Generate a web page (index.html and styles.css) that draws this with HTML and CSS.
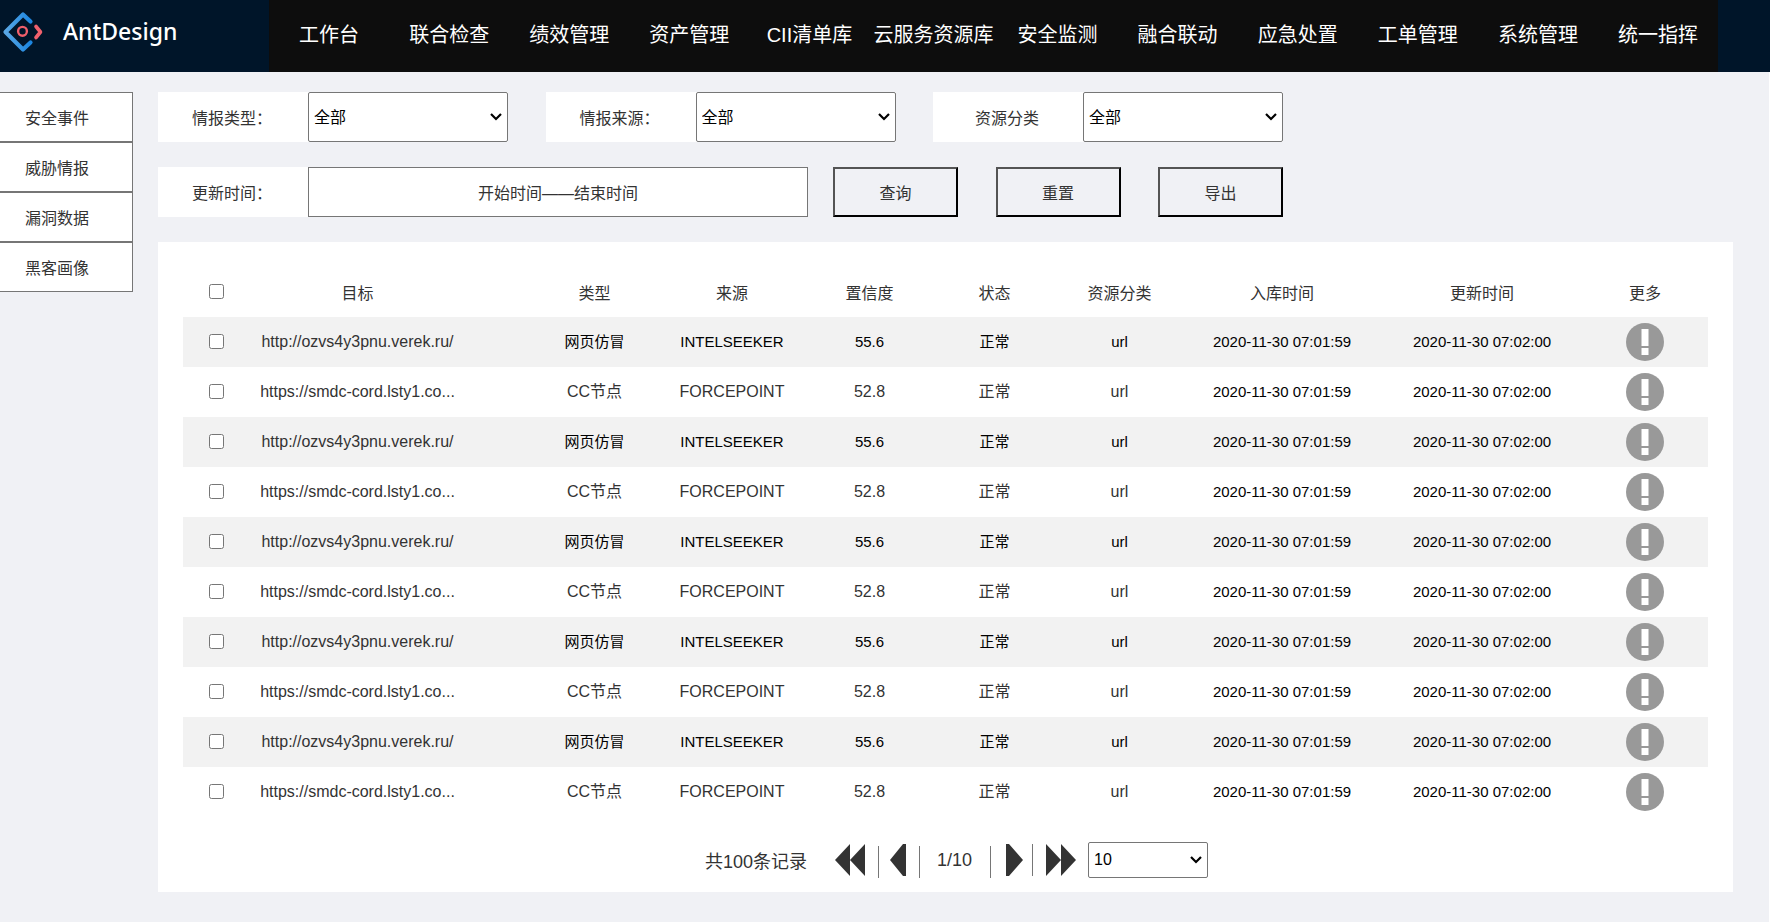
FILE: index.html
```html
<!DOCTYPE html>
<html lang="zh-CN">
<head>
<meta charset="utf-8">
<title>AntDesign</title>
<link rel="stylesheet" href="styles.css">
</head>
<body>
<div class="page">
  <header class="header">
    <div class="brand">
      <svg class="logo" viewBox="0 0 42 44" fill="none" aria-hidden="true">
        <defs><linearGradient id="blue" x1="0" y1="0" x2="1" y2="0"><stop offset="0" stop-color="#5aa7e4"/><stop offset="1" stop-color="#1c86e0"/></linearGradient></defs>
        <path d="M29.500 11.500 22 4.500 4.500 22 22 39.500 29.500 32.500" stroke="url(#blue)" stroke-width="4.200" stroke-linejoin="round" stroke-linecap="round"/>
        <circle cx="21.500" cy="21.300" r="4.400" stroke="#ef5f6b" stroke-width="2.400"/>
        <path d="M35 16.500 39.500 22 35 27.500" stroke="#f0616d" stroke-width="3.600" stroke-linejoin="round" stroke-linecap="round"/>
      </svg>
      <span class="brand-name">AntDesign</span>
    </div>
    <nav class="nav">
      <a href="#">工作台</a><a href="#">联合检查</a><a href="#">绩效管理</a><a href="#">资产管理</a><a href="#">CII清单库</a><a href="#">云服务资源库</a><a href="#">安全监测</a><a href="#">融合联动</a><a href="#">应急处置</a><a href="#">工单管理</a><a href="#">系统管理</a><a href="#">统一指挥</a>
    </nav>
  </header>
  <div class="body">
    <aside class="side">
      <a href="#">安全事件</a><a href="#">威胁情报</a><a href="#">漏洞数据</a><a href="#">黑客画像</a>
    </aside>
    <main class="main">
      <form class="filters">
        <div class="filter-row">
          <div class="field"><label for="type">情报类型：</label><select id="type"><option>全部</option></select></div>
          <div class="field"><label for="source">情报来源：</label><select id="source"><option>全部</option></select></div>
          <div class="field"><label for="category">资源分类</label><select id="category"><option>全部</option></select></div>
        </div>
        <div class="filter-row">
          <div class="field"><label for="time">更新时间：</label><input id="time" type="text" value="开始时间——结束时间"></div>
          <div class="actions"><button type="button">查询</button><button type="button">重置</button><button type="button">导出</button></div>
        </div>
      </form>
      <section class="panel">
        <table class="table">
          <colgroup><col class="c-check"><col class="c-target"><col class="c-mid"><col class="c-source"><col class="c-mid"><col class="c-mid"><col class="c-mid"><col class="c-time"><col class="c-time"><col class="c-more"></colgroup>
          <thead>
            <tr><th><input type="checkbox" aria-label="全选"></th><th class="target">目标</th><th>类型</th><th>来源</th><th>置信度</th><th>状态</th><th>资源分类</th><th>入库时间</th><th>更新时间</th><th>更多</th></tr>
          </thead>
          <tbody id="rows"></tbody>
        </table>
        <div class="pager">
          <span class="total">共100条记录</span>
          <button type="button" aria-label="首页"><svg width="30" height="32" viewBox="0 0 30 32"><path d="M0 16 15 0v32zM15 16 30 0v32z"/></svg></button>
          <i class="bar"></i>
          <button type="button" aria-label="上一页"><svg width="16" height="32" viewBox="0 0 16 32"><path d="M0 16 13 0h3v32h-3z"/></svg></button>
          <i class="bar"></i>
          <span class="current">1/10</span>
          <i class="bar"></i>
          <button type="button" class="next" aria-label="下一页"><svg width="17" height="32" viewBox="0 0 17 32"><path d="M17 16 3 0H0v32h3z"/></svg></button>
          <i class="bar high"></i>
          <button type="button" aria-label="末页"><svg width="30" height="32" viewBox="0 0 30 32"><path d="M15 16 0 0v32zM30 16 15 0v32z"/></svg></button>
          <select aria-label="每页条数"><option>10</option></select>
        </div>
      </section>
    </main>
  </div>
</div>
<script src="rows.js"></script>
</body>
</html>
```
FILE: rows.js
```js
const kinds = [
  ['http://ozvs4y3pnu.verek.ru/', '网页仿冒', 'INTELSEEKER', '55.6', '正常', 'url'],
  ['https://smdc-cord.lsty1.co...', 'CC节点', 'FORCEPOINT', '52.8', '正常', 'url']
];
const icon = '<svg width="38" height="38" viewBox="0 0 38 38"><circle cx="19" cy="19" r="19" fill="#999"/><path d="M15.500 6h7v17h-7zM15.500 25h7v7h-7z" fill="#fff"/></svg>';
let html = '';
for (let i = 0; i < 10; i++) {
  const [target, ...rest] = kinds[i % 2];
  html += `<tr><td><input type="checkbox" aria-label="选择第${i + 1}行"></td><td class="target">${target}</td>`
    + rest.map(v => `<td>${v}</td>`).join('')
    + '<td class="time">2020-11-30 07:01:59</td><td class="time">2020-11-30 07:02:00</td>'
    + `<td><button type="button" class="more" aria-label="更多">${icon}</button></td></tr>`;
}
document.getElementById('rows').innerHTML = html;
```
FILE: styles.css
```css
* { box-sizing: border-box; }
body {
  margin: 0;
  background: #fff;
  color: #333;
  font: 16px/24px "Liberation Sans", "Noto Sans CJK SC", sans-serif;
}
button, input, select { font: inherit; color: inherit; margin: 0; }
a { color: inherit; text-decoration: none; }
select {
  appearance: none;
  padding: 0 24px 0 5px;
  border: 1px solid #767676;
  border-radius: 2px;
  background: #fff url("data:image/svg+xml,%3Csvg xmlns='http://www.w3.org/2000/svg' width='12' height='8' viewBox='0 0 12 8'%3E%3Cpath d='M1 1l5 5 5-5' fill='none' stroke='%23000' stroke-width='2.2'/%3E%3C/svg%3E") no-repeat right 5px center;
  color: #000;
}

.page { margin-right: 19px; min-height: 100vh; background: #f0f1f5; }

.header { display: flex; height: 72px; margin-right: -1px; padding-right: 52px; background: #001529; }
.brand { display: flex; flex: none; width: 269px; padding: 10px 0 0 1px; }
.logo { width: 42px; height: 44px; }
.brand-name { margin-left: 20px; color: #fff; font: 500 23px/42px "Noto Sans", sans-serif; }
.nav { display: flex; flex: 1; background: #0d0d0d; color: #fff; font-size: 20px; line-height: 70px; }
.nav a { flex: 1 1 0; padding: 0 4px; text-align: center; white-space: nowrap; }

.body { display: flex; padding: 20px 36px 30px 0; }
.side { flex: none; width: 133px; margin-right: 25px; }
.side a { display: block; height: 50px; padding-left: 25px; border: 1px solid #767676; border-left: 0; background: #fff; line-height: 52px; }

.main { flex: 1; min-width: 0; }
.filters { max-width: 1125px; }
.filter-row { display: flex; justify-content: space-between; margin-bottom: 25px; }
.field { display: flex; height: 50px; background: #fff; }
.field label { width: 150px; padding-right: 2px; text-align: center; line-height: 54px; }
.field select { width: 200px; padding-top: 2px; }
.field input { width: 500px; padding: 4px 0 0; border: 1px solid #767676; text-align: center; }
.actions { display: flex; justify-content: space-between; width: 450px; }
.actions button { width: 125px; padding: 4px 0 0; border: 2px outset #000; background: transparent; }

.panel { padding: 25px 25px 14px; background: #fff; }
.table { width: 100%; table-layout: fixed; border-collapse: collapse; text-align: center; }
.c-check { width: 66px; }
.c-target { width: 283px; }
.c-mid { width: 125px; }
.c-source { width: 150px; }
.c-time { width: 200px; }
.c-more { width: 126px; }
.table th, .table td { height: 50px; padding: 0; font-weight: 400; white-space: nowrap; }
.table th { padding-top: 4px; }
.table th:first-child, .table td:first-child { padding: 0 0 2px; }
.table .target { padding-right: 66px; font-size: 16px; }
.table tbody tr:nth-child(odd) { background: #f2f2f2; color: #000; font-size: 15px; }
.table tbody tr:nth-child(odd) .target { color: #333; }
.table .time { color: #000; font-size: 15px; }
.table input { display: block; width: 15px; height: 15px; margin: 0 auto; }
.more { display: block; margin: 0 auto; padding: 0; border: 0; background: none; }
.more svg { display: block; }

.pager { display: flex; align-items: center; justify-content: center; height: 36px; margin-top: 25px; padding-left: 22px; font-size: 18px; }
.pager button { padding: 0; border: 0; background: none; }
.pager svg { display: block; fill: #333; }
.total { margin-right: 28px; padding-top: 4px; }
.bar { width: 1px; height: 32px; margin: 4px 11px 0 13px; background: #767676; }
.current { margin: 0 5px 0 6px; }
.next { margin-left: 4px; }
.bar.high { margin: 0 13px 0 9px; }
.pager select { width: 120px; height: 36px; margin-left: 12px; font-size: 16px; }
```
